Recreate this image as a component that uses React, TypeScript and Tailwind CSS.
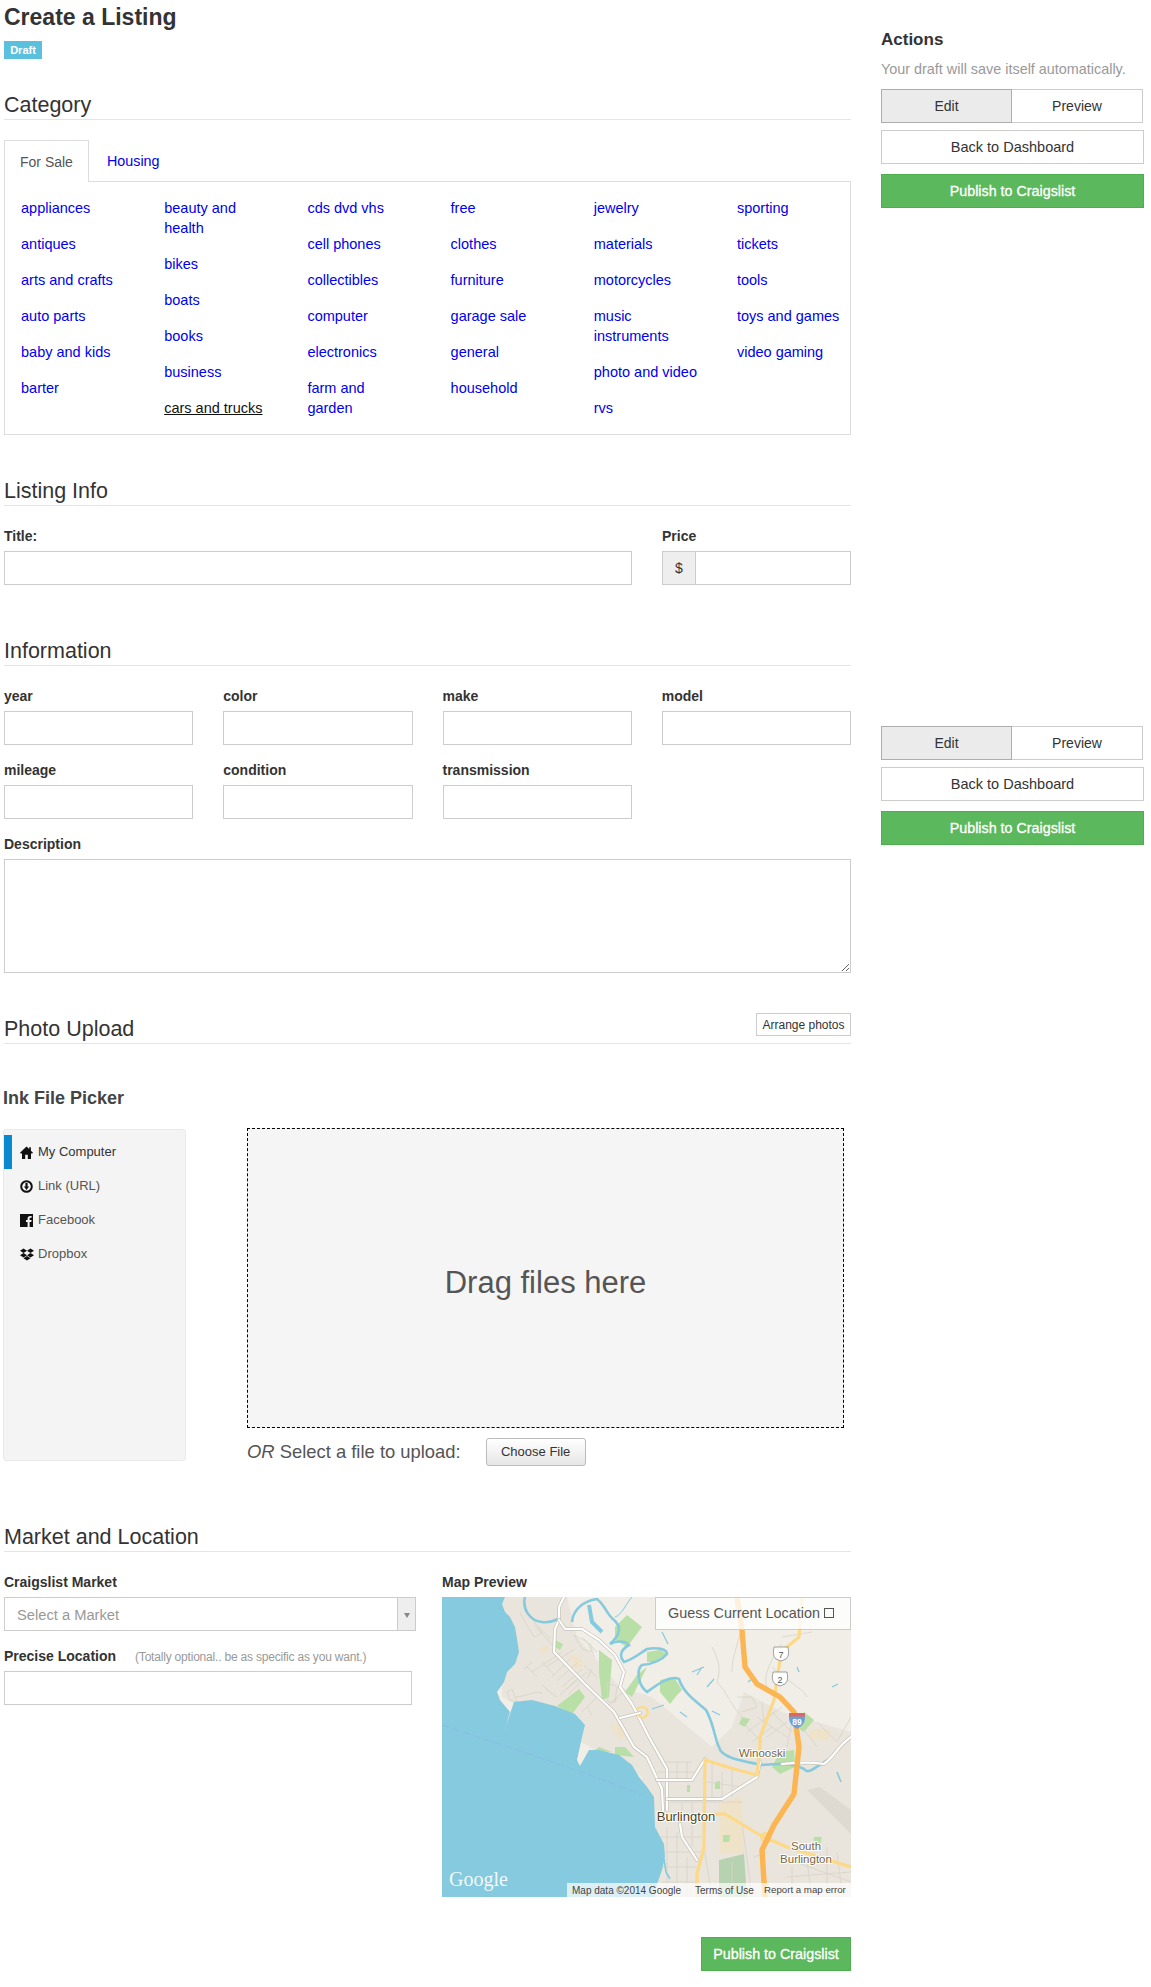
import React from "react"
import { FaDropbox } from "react-icons/fa"

const categoryColumns = [
  ["appliances", "antiques", "arts and crafts", "auto parts", "baby and kids", "barter"],
  ["beauty and health", "bikes", "boats", "books", "business", "cars and trucks"],
  ["cds dvd vhs", "cell phones", "collectibles", "computer", "electronics", "farm and garden"],
  ["free", "clothes", "furniture", "garage sale", "general", "household"],
  ["jewelry", "materials", "motorcycles", "music instruments", "photo and video", "rvs"],
  ["sporting", "tickets", "tools", "toys and games", "video gaming"],
]

const inputClass = "block h-[34px] w-full border border-[#ccc] bg-white"
const labelClass = "block text-[14px] font-bold leading-5 text-[#333]"

function SectionHeader({ title, children }: { title: string; children?: React.ReactNode }) {
  return (
    <div className="flex items-start justify-between border-b border-[#e5e5e5] pb-[2px]">
      <h2 className="text-[21.5px] font-normal leading-6 text-[#333]">{title}</h2>
      {children}
    </div>
  )
}

function Field({ label, className }: { label: string; className?: string }) {
  return (
    <div className={className}>
      <label className={labelClass}>{label}</label>
      <input type="text" className={`${inputClass} mt-[5px]`} />
    </div>
  )
}

function ActionButtons() {
  return (
    <div>
      <div className="flex w-[262px] text-[14px] text-[#333]">
        <button className="h-[34px] w-1/2 border border-[#adadad] bg-[#ebebeb]">Edit</button>
        <button className="h-[34px] w-1/2 border border-l-0 border-[#ccc] bg-white">Preview</button>
      </div>
      <button className="mt-[7px] block h-[34px] w-[263px] border border-[#ccc] bg-white pt-px text-[14.5px] text-[#333]">
        Back to Dashboard
      </button>
      <button className="mt-[10px] block h-[34px] w-[263px] border border-[#4cae4c] bg-[#5cb85c] pt-px text-[14.3px] text-white [-webkit-text-stroke:0.3px_white]">
        Publish to Craigslist
      </button>
    </div>
  )
}

function HomeIcon() {
  return (
    <svg viewBox="0 0 13 13" className="h-[13px] w-[13px]">
      <path d="M6.500.5l2.700 2.600V1.200h1.700v3.500L13 6.800l-.8.8H11V13H7.800V8.800H5.200V13H2V7.600H.8L0 6.800z" fill="#111" />
    </svg>
  )
}

function LinkIcon() {
  return (
    <svg viewBox="0 0 13 13" className="h-[13px] w-[13px]">
      <circle cx="6.5" cy="6.5" r="5.3" fill="none" stroke="#111" strokeWidth="2" />
      <path d="M5.4 3h2.2v3.4h1.5L6.5 10 3.9 6.4h1.5z" fill="#111" />
    </svg>
  )
}

function FacebookIcon() {
  return (
    <svg viewBox="0 0 13 13" className="h-[13px] w-[13px]">
      <path fillRule="evenodd" d="M0 0h13v13H9.6V8h1.7l.3-2H9.6V4.800c0-.6.2-1 1-1h1V2.100c-.3 0-.8-.1-1.400-.1C8.700 2 7.600 2.900 7.600 4.500V6H6v2h1.600v5H0z" fill="#111" />
    </svg>
  )
}

const pickerItems = [
  { label: "My Computer", icon: <HomeIcon />, active: true },
  { label: "Link (URL)", icon: <LinkIcon />, active: false },
  { label: "Facebook", icon: <FacebookIcon />, active: false },
  { label: "Dropbox", icon: <FaDropbox className="h-[15px] w-[14px] text-[#111]" />, active: false },
]

const parks = [
  "M185 18L200 30 185 50 173 43 173 30Z",
  "M157 53L170 63 167 100 160 103 157 75Z",
  "M137 92L143 100 130 117 115 109Z",
  "M113 43L121 47 118 53 113 50Z",
  "M205 70L190 100 183 95 195 78Z",
  "M205 55L218 53 225 57 212 65 205 65Z",
  "M218 83L232 80 240 93 235 98 228 107 218 95Z",
  "M173 150L183 150 192 160 173 158Z",
  "M157 150L170 155 152 154Z",
  "M362 115L372 123 362 135 356 131Z",
  "M338 155L352 153 353 170 338 177 330 170Z",
  "M300 120L308 122 303 130 297 127Z",
  "M273 185L278 184 278 192 273 192Z",
  "M281 238L288 238 287 245 281 245Z",
  "M372 240L380 240 377 252 370 250Z",
  "M245 188L248 188 248 195 245 195Z",
]

const tans = [
  "M97 52L105 48 107 53 100 57Z",
  "M128 58L138 58 142 68 133 72Z",
  "M168 128L180 127 185 138 177 142Z",
  "M368 133L388 132 387 143 368 143Z",
  "M277 205L300 200 302 257 278 257Z",
]

const streets = [
  "M78 16L92 40M85 14L100 36M92 40L100 36M97 30L108 42M92 28L112 50",
  "M90 75L120 55M100 65L112 78M85 70L95 80M82 72L90 65M104 70L133 52M110 80L128 62M115 84L135 66M120 90L140 72M125 92L145 75",
  "M65 95L70 92 75 105 68 103ZM72 100C85 100 92 93 100 96M100 88L108 95M104 92L115 100M118 98L135 82M126 98L140 84",
  "M132 38L145 45 150 55 140 52ZM140 40L155 55M148 46L152 60M142 68L155 80M150 72L145 82M165 85L175 90 173 105 166 105ZM172 105L180 95",
  "M140 115L155 100M145 110L150 118M165 110L175 100",
  "M218 165L250 165M215 175L255 175M222 190L222 220M235 165L235 183M245 165L245 183M228 205L262 205M240 205L240 225M250 205L250 250",
  "M262 205L300 205M270 165L270 200M280 175L280 200M265 185L300 190M290 170L290 200M225 230L225 300M235 235L235 300M245 260L245 300",
  "M215 240L260 240M215 255L260 255M218 270L255 270M220 285L255 285M262 250L270 300M290 265L290 300",
  "M270 50C275 60 280 70 275 85 285 95 290 110 300 120M295 100L310 100 315 110 300 115M300 30C295 50 290 60 290 75",
  "M305 135L340 110M310 145L330 130M300 125L320 145M315 120L345 140M330 115L350 135M325 140L345 125M320 105L322 125",
  "M360 130L375 150M375 125L395 145 409 120M345 150L350 125",
  "M340 47C330 60 320 80 325 90M340 40L370 35M330 70C345 85 360 90 365 100",
  "M345 262L409 285M365 265L370 300M385 250L385 290M395 255L400 295M345 280L409 275M330 290L345 290M350 270L350 300",
  "M300 225L310 300M312 260L325 255",
]

function MapPreview() {
  return (
    <div className="relative mt-[5px] h-[300px] w-[409px] overflow-hidden">
      <svg viewBox="0 0 409 300" className="block h-full w-full">
        <rect width="409" height="300" fill="#f0eee6" />
        <path d="M60 0L125 0 135 40 178 90 210 100 270 150 290 130 302 95 340 115 409 135 409 300 200 300 200 180 60 100Z" fill="#e9e5dc" />
        <path d="M365 193L378 190 409 213 409 237Z" fill="#dedad2" />
        <path d="M277 263L302 257 305 300 277 300Z" fill="#b7d2b0" />
        {tans.map((d) => (
          <path key={d} d={d} fill="#eee2c8" />
        ))}
        {parks.map((d) => (
          <path key={d} d={d} fill="#b8dfa6" />
        ))}
        {streets.map((d) => (
          <path key={d} d={d} fill="none" stroke="#d8d3c8" strokeWidth="0.8" />
        ))}

        {/* lake */}
        <path
          d="M0 0L63 0 60 7 63 15 68 20 73 30 75 42 77 55 73 67 65 75 62 85 55 95 58 103 68 115 63 132 68 117 72 105 90 103 113 109 133 117 143 128 140 140 135 163 138 169 147 153 157 153 177 158 190 168 197 180 205 190 212 200 213 230 222 247 223 260 220 273 215 287 213 300 0 300Z"
          fill="#85cade"
        />
        <path d="M0 128C60 148 130 170 200 198" fill="none" stroke="#8ab8ea" strokeWidth="0.7" strokeDasharray="8 3" />

        {/* rivers */}
        <g fill="none" stroke="#85cade" strokeWidth="2.600">
          <path d="M83 0C80 12 88 24 100 25 106 26 112 24 116 22" />
          <path d="M130 25C131 12 142 4 155 2 163 8 165 18 172 23 180 30 178 38 168 47 175 43 184 44 187 48 180 52 176 58 182 65 192 62 198 56 205 52 215 50 225 52 225 57 220 63 210 67 200 68 194 73 196 88 205 95 216 87 228 78 237 82 241 95 252 103 264 113 272 127 273 143 277 150 279 160 295 163 320 168 332 167 348 165 362 172 367 178 372 170 388 162 402 167L409 170" />
          <path d="M173 20C180 18 185 5 190 0" strokeWidth="1" />
          <path d="M147 8L150 25 160 35" strokeWidth="4" />
          <path d="M222 262L224 275 228 282" strokeWidth="1.600" />
          <path d="M395 175L399 185" strokeWidth="1.600" />
        </g>
        <g fill="none" stroke="#85cade" strokeWidth="1.200">
          <path d="M220 35L226 47M250 75L262 70M255 78L260 70M265 90L272 82M306 85L310 82M278 118L270 114M222 108L210 112M245 120L238 115M390 90L396 87M355 70L357 75" />
        </g>

        {/* roads */}
        <g fill="none" strokeLinejoin="round" strokeLinecap="round">
          {[
            "M122 0L117 10 117 23 113 32 112 55 143 87 172 115 192 150 205 160 220 192 221 214",
            "M117 23L123 32 140 32 157 43 173 58 182 75 178 90 190 107 207 140 225 172 225 213",
            "M178 121L198 116",
            "M215 183L250 183 263 162",
            "M225 202L280 202 315 180 318 165",
            "M238 227L240 240 255 263",
            "M340 167C360 165 370 165 382 167 392 160 395 150 409 140",
          ].map((d) => (
            <g key={d}>
              <path d={d} stroke="#c8c4ba" strokeWidth="3.600" />
              <path d={d} stroke="#ffffff" strokeWidth="2.200" />
            </g>
          ))}
          {[
            "M360 0L357 40 345 50 338 63 332 103 318 140 318 150 315 178 292 172 263 163 262 250 255 277 255 300",
            "M273 217L283 217 318 238 345 250 409 270",
          ].map((d) => (
            <path key={d} d={d} stroke="#fdd885" strokeWidth="3.200" />
          ))}
          <path d="M195 112C200 108 205 110 206 116 203 122 199 122 196 118" stroke="#fdd885" strokeWidth="2" />
          <path d="M320 238C324 234 330 238 328 244 322 246 318 243 320 238" stroke="#fdd885" strokeWidth="2.500" />
          <path
            d="M295 0L300 33 303 70 315 87 338 100 352 115 357 150 352 197 332 228 320 253 323 300"
            stroke="#fbb552"
            strokeWidth="5.400"
          />
        </g>

        {/* shields */}
        <g>
          {[
            { x: 339, y: 57, n: "7" },
            { x: 338, y: 82, n: "2" },
          ].map((s) => (
            <g key={s.n}>
              <path
                d={`M${s.x - 7} ${s.y - 7}h14v1c1 4 1 8-2 11l-5 2-5-2c-3-3-3-7-2-11z`}
                fill="#fff"
                stroke="#888"
                strokeWidth="0.800"
              />
              <text x={s.x} y={s.y + 3.500} textAnchor="middle" fontSize="9" fill="#555" fontFamily="Liberation Sans">
                {s.n}
              </text>
            </g>
          ))}
          <path d="M347 116h16v4c0 6-3 9-8 12-5-3-8-6-8-12z" fill="#6f9fd8" />
          <rect x="347" y="116" width="16" height="3.500" fill="#e0675f" />
          <text x="355" y="128" textAnchor="middle" fontSize="8.500" fontWeight="bold" fill="#fff" fontFamily="Liberation Sans">
            89
          </text>
        </g>

        {/* place labels */}
        <g fontFamily="Liberation Sans" stroke="#fff" strokeWidth="2" paintOrder="stroke">
          <text x="320" y="160" textAnchor="middle" fontSize="11.500" fill="#7a6640">Winooski</text>
          <text x="244" y="224" textAnchor="middle" fontSize="13" fill="#4e3f22">Burlington</text>
          <text x="364" y="253" textAnchor="middle" fontSize="11.500" fill="#7a6640">South</text>
          <text x="364" y="266" textAnchor="middle" fontSize="11.500" fill="#7a6640">Burlington</text>
        </g>
        <text x="7" y="289" fontFamily="Liberation Serif" fontSize="20" fill="#fff" opacity="0.9">Google</text>
      </svg>

      <div className="absolute right-0 top-0 flex h-[33px] w-[196px] items-center border border-[#ccc] bg-white/80 pl-[12px] pt-px text-[14.4px] text-[#555]">
        Guess Current Location
        <span className="mb-[3px] ml-[4px] block h-[10px] w-[10px] border-[1.5px] border-[#555]" />
      </div>
      <div className="absolute bottom-0 right-0 flex h-[14px] w-[284px] items-center bg-white/70 pl-[5px] text-[10px] text-[#444]">
        <span className="w-[123px]">Map data ©2014 Google</span>
        <span className="w-[69px]">Terms of Use</span>
        <span className="text-[9.7px]">Report a map error</span>
      </div>
    </div>
  )
}

export default function App() {
  return (
    <div className="flex min-h-[1987px] w-[1151px] bg-white pl-1 font-['Liberation_Sans',Arial,sans-serif] text-[#333]">
      <main className="w-[847px]">
        <h1 className="text-[23px] font-bold leading-[34px] text-[#333]">Create a Listing</h1>
        <span className="mt-[7px] block h-[18px] w-[38px] bg-[#5bc0de] text-center text-[11px] font-bold leading-[18px] text-white">
          Draft
        </span>

        <section className="mt-[34px]">
          <SectionHeader title="Category" />
          <div className="mt-5 flex h-[42px] border-b border-[#ddd]">
            <div className="h-[42px] w-[85px] border border-b-0 border-[#ddd] bg-white pl-[15px] text-[14px] leading-[42px] text-[#555]">
              For Sale
            </div>
            <a className="ml-[18px] text-[14.3px] leading-[42px] text-[#00e]">Housing</a>
          </div>
          <div className="grid grid-cols-[repeat(5,143.2px)_1fr] border-x border-b border-[#ddd] pl-4 pt-4">
            {categoryColumns.map((column, i) => (
              <div key={i}>
                {column.map((name) => (
                  <div key={name} className="mb-4 w-[106px] text-[14.5px] leading-5">
                    <a className={name === "cars and trucks" ? "text-[#111] underline" : "text-[#00e]"}>{name}</a>
                  </div>
                ))}
              </div>
            ))}
          </div>
        </section>

        <section className="mt-[44px]">
          <SectionHeader title="Listing Info" />
          <div className="mt-5 grid grid-cols-[628px_189px] gap-x-[30px]">
            <Field label="Title:" />
            <div>
              <label className={labelClass}>Price</label>
              <div className="mt-[5px] flex h-[34px] border border-[#ccc]">
                <span className="w-[33px] border-r border-[#ccc] bg-[#eee] text-center text-[14px] leading-8 text-[#333]">$</span>
                <input type="text" className="min-w-0 flex-1" />
              </div>
            </div>
          </div>
        </section>

        <section className="mt-[54px]">
          <SectionHeader title="Information" />
          <div className="mt-5 grid grid-cols-4 gap-x-[30px] gap-y-[15px]">
            {["year", "color", "make", "model", "mileage", "condition", "transmission"].map((name) => (
              <Field key={name} label={name} />
            ))}
          </div>
          <label className={`${labelClass} mt-[15px]`}>Description</label>
          <textarea className="mt-[5px] block h-[114px] w-full border border-[#ccc]" />
        </section>

        <section className="mt-[44px]">
          <SectionHeader title="Photo Upload">
            <button className="-mt-[4px] h-[23px] w-[95px] border border-[#ccc] bg-white text-[12px] text-[#333]">
              Arrange photos
            </button>
          </SectionHeader>
          <h3 className="-ml-px mt-[42px] text-[18px] font-bold leading-6 text-[#444]">Ink File Picker</h3>
          <div className="mt-[18px] flex gap-[61px]">
            <div className="-ml-px mt-px h-[332px] w-[183px] rounded-[3px] border border-[#e9e9e9] bg-[#f4f4f4] pt-[5px]">
              {pickerItems.map((item) => (
                <div
                  key={item.label}
                  className={`flex h-[34px] items-center border-l-[8px] pl-[8px] text-[13px] ${
                    item.active ? "border-[#0a88d0] text-[#333]" : "border-transparent text-[#555]"
                  }`}
                >
                  <span className="flex w-[18px] justify-start">{item.icon}</span>
                  {item.label}
                </div>
              ))}
            </div>
            <div className="w-[597px]">
              <div className="flex h-[300px] items-center justify-center border border-dashed border-black bg-[#f5f5f5] pt-[10px] text-[31px] text-[#555]">
                Drag files here
              </div>
              <div className="mt-[10px] flex h-[28px] items-center text-[18.4px] text-[#555]">
                <span>
                  <em>OR</em> Select a file to upload:
                </span>
                <button className="ml-[25px] h-[28px] w-[100px] rounded-[3px] border border-[#bbb] bg-gradient-to-b from-white to-[#e6e6e6] text-[13px] text-[#333]">
                  Choose File
                </button>
              </div>
            </div>
          </div>
        </section>

        <section className="mt-[59px]">
          <SectionHeader title="Market and Location" />
          <div className="mt-5 flex gap-[26px]">
            <div className="w-[412px]">
              <label className={labelClass}>Craigslist Market</label>
              <div className="mt-[5px] flex h-[34px] border border-[#ccc] text-[14.7px] text-[#999]">
                <span className="flex-1 pl-[12px] leading-[35px]">Select a Market</span>
                <span className="flex w-[18px] items-center justify-center border-l border-[#ccc] bg-[#eee] pt-[2px]">
                  <span className="block h-0 w-0 border-x-[3.5px] border-t-[5px] border-x-transparent border-t-[#888]" />
                </span>
              </div>
              <div className="mt-[15px] flex items-baseline">
                <label className={labelClass}>Precise Location</label>
                <span className="ml-[19px] text-[12px] tracking-[-0.2px] text-[#999]">(Totally optional.. be as specific as you want.)</span>
              </div>
              <input type="text" className={`${inputClass} mt-[5px] !w-[408px]`} />
            </div>
            <div className="w-[409px]">
              <label className={labelClass}>Map Preview</label>
              <MapPreview />
            </div>
          </div>
          <div className="mt-[40px] flex justify-end">
            <button className="h-[34px] w-[150px] border border-[#4cae4c] bg-[#5cb85c] pt-px text-[14.3px] text-white [-webkit-text-stroke:0.3px_white]">
              Publish to Craigslist
            </button>
          </div>
        </section>
      </main>

      <aside className="ml-[30px] w-[263px] pt-[28px]">
        <h3 className="text-[17px] font-bold leading-6 text-[#333]">Actions</h3>
        <p className="mt-[7px] text-[14.4px] leading-5 text-[#999]">Your draft will save itself automatically.</p>
        <div className="mt-[10px]">
          <ActionButtons />
        </div>
        <div className="mt-[518px]">
          <ActionButtons />
        </div>
      </aside>
    </div>
  )
}
